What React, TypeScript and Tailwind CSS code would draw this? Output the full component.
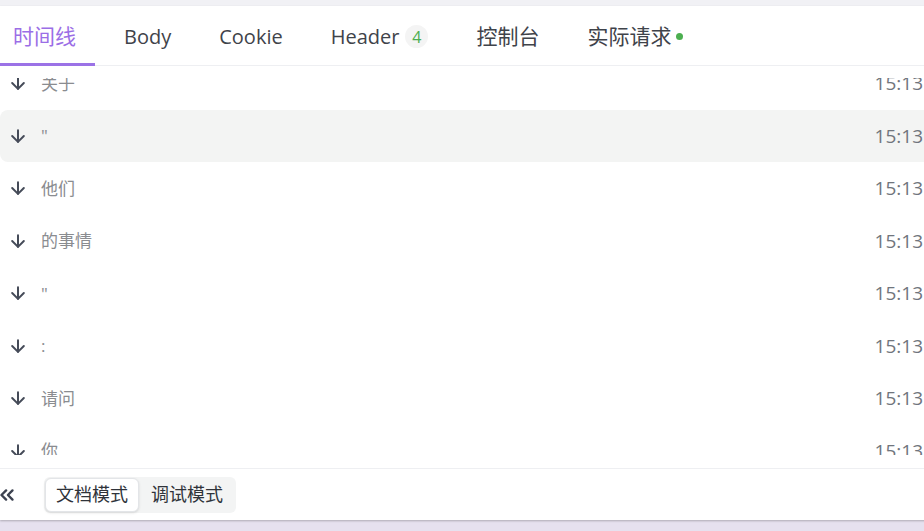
import { ArrowDown, ChevronsLeft } from "lucide-react";

const rows = [
  { text: "关于", time: "15:13" },
  { text: "\"", time: "15:13", active: true },
  { text: "他们", time: "15:13" },
  { text: "的事情", time: "15:13" },
  { text: "\"", time: "15:13" },
  { text: ":", time: "15:13" },
  { text: "请问", time: "15:13" },
  { text: "你", time: "15:13" },
];

const font = { fontFamily: '"Open Sans", "Noto Sans CJK SC", sans-serif' };

export default function App() {
  return (
    <div className="h-[531px] w-[924px] overflow-hidden bg-[#e6e1ef]" style={font}>
      <div className="h-[6px] bg-[#f1f1f5]" />
      <div className="w-[940px] bg-white shadow-[0_1px_2px_rgba(0,0,0,0.25)]">
        {/* tabs */}
        <div className="flex h-[60px] items-center gap-[48px] border-b border-[#eeeff2] pl-[13px] pt-[2px] text-[20px] text-[#3f434a]">
          <div className="relative flex h-full items-center text-[21px] text-[#9b6ee6]">
            时间线
            <span className="absolute bottom-[-1px] left-[-13px] h-[3px] w-[95px] bg-[#9b72e6]" />
          </div>
          <div>Body</div>
          <div>Cookie</div>
          <div className="flex items-center gap-[6px]">
            Header
            <span className="flex h-[23px] w-[23px] items-center justify-center rounded-full bg-[#f4f4f4] text-[16px] text-[#4caf50]">
              4
            </span>
          </div>
          <div className="text-[21px]">控制台</div>
          <div className="flex items-center gap-[5px] text-[21px]">
            实际请求
            <span className="h-[7px] w-[7px] rounded-full bg-[#4caf50]" />
          </div>
        </div>

        {/* timeline list */}
        <div className="pt-[12px] pb-[13px]">
          <div className="h-[377px] overflow-hidden">
            <div className="-mt-[21px]">
              {rows.map((r, i) => (
                <div
                  key={i}
                  className={
                    "flex h-[52.5px] items-center pr-[17px] " +
                    (r.active ? "rounded-l-lg bg-[#f3f4f3]" : "")
                  }
                >
                  <ArrowDown className="ml-[8px] h-[20px] w-[20px] text-[#454b58]" strokeWidth={2.4} />
                  <span className="ml-[13px] flex-1 text-[17px] text-[#8a8c90]">{r.text}</span>
                  <span className="text-[19px] text-[#70757d]">{r.time}</span>
                </div>
              ))}
            </div>
          </div>
        </div>

        {/* footer */}
        <div className="flex h-[52px] items-center border-t border-[#eeeff2]">
          <ChevronsLeft className="-ml-[4px] h-[22px] w-[22px] text-[#3c4250]" strokeWidth={2.6} />
          <div className="ml-[26px] flex h-[36px] items-center rounded-md bg-[#f3f4f4] p-[1px] text-[18px] text-[#2f333a]">
            <div className="flex h-full items-center rounded-md border border-[#e3e5e8] bg-white px-[10px] shadow-sm">
              文档模式
            </div>
            <div className="flex h-full items-center px-[12px]">调试模式</div>
          </div>
        </div>
      </div>
    </div>
  );
}
